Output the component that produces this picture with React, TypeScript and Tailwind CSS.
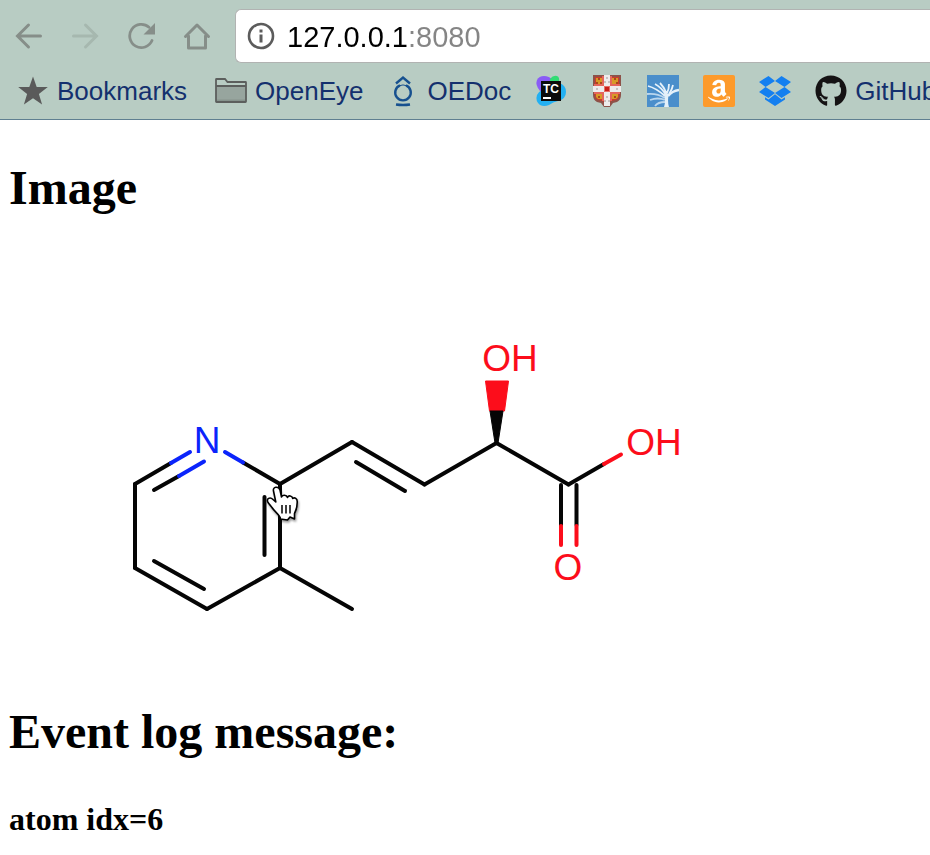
import React, { useState } from 'react'
import { FaAmazon, FaGithub } from 'react-icons/fa'

interface Bookmark {
  name: string
  label?: string
  icon: React.ReactNode
}

type Point = [number, number]

interface Bond {
  from: Point
  to: Point
  color: string
}

const BLACK = '#050505'
const BLUE = '#0b24fb'
const RED = '#fc0d1b'

const bonds: Bond[] = [
  // pyridine ring
  { from: [135, 484], to: [171, 463], color: BLACK },
  { from: [154, 490], to: [179, 476], color: BLACK },
  { from: [135, 484], to: [135, 568], color: BLACK },
  { from: [135, 568], to: [207, 609], color: BLACK },
  { from: [154, 561], to: [204, 589], color: BLACK },
  { from: [207, 609], to: [280, 568], color: BLACK },
  { from: [280, 568], to: [280, 484], color: BLACK },
  { from: [264.5, 497], to: [264.5, 555], color: BLACK },
  { from: [280, 484], to: [243, 462.5], color: BLACK },
  // methyl
  { from: [280, 568], to: [352, 609], color: BLACK },
  // chain
  { from: [280, 484], to: [352, 442], color: BLACK },
  { from: [352, 442], to: [424.5, 484.5], color: BLACK },
  { from: [356, 462], to: [405, 491], color: BLACK },
  { from: [424.5, 484.5], to: [496.5, 443], color: BLACK },
  { from: [496.5, 443], to: [568.5, 484.5], color: BLACK },
  { from: [568.5, 484.5], to: [604, 464], color: BLACK },
  { from: [561, 485], to: [561, 525], color: BLACK },
  { from: [576.5, 485], to: [576.5, 525], color: BLACK },
  // hetero atom halves
  { from: [171, 463], to: [190, 452], color: BLUE },
  { from: [179, 476], to: [204, 461.5], color: BLUE },
  { from: [243, 462.5], to: [225, 452], color: BLUE },
  { from: [604, 464], to: [621, 454.5], color: RED },
  { from: [561, 526], to: [561, 545], color: RED },
  { from: [576.5, 526], to: [576.5, 545], color: RED },
]

function StarIcon() {
  return (
    <svg viewBox="0 0 32 32" className="size-8" aria-hidden="true">
      <path
        d="M16 1.5l3.7 10.4 11.1.2-8.9 6.8 3.2 10.7L16 23.3l-9.1 6.3 3.2-10.7L1.2 12.1l11.1-.2z"
        fill="#5a5a5a"
      />
    </svg>
  )
}

function FolderIcon() {
  return (
    <svg viewBox="0 0 32 32" className="size-8" aria-hidden="true">
      <path d="M1 11h30v16H1z" fill="#97a59e" />
      <path d="M1 24.500h30V27H1z" fill="#86938d" />
      <path
        d="M1 26.500V4.500Q1 4 1.500 4H10l2.500 3H30.500q.5 0 .5.500v19q0 .5-.5.500H1.500q-.5 0-.5-.5zM1 11h30"
        fill="none"
        stroke="#5c5f5d"
        strokeWidth="1.800"
      />
    </svg>
  )
}

function OEDocIcon() {
  return (
    <svg viewBox="0 0 32 32" className="size-8" fill="none" stroke="#16508f" aria-hidden="true">
      <path d="M9 8.500L16 2.500l7 6" strokeWidth="2.400" />
      <path d="M13 10.400A7.800 7.800 0 1 0 19 10.400" strokeWidth="2.400" />
      <path d="M12.500 10.700q3.500-1.500 7 0" strokeWidth="1" />
      <path d="M9 29.500q7 1 14 0" strokeWidth="2.600" />
    </svg>
  )
}

function TeamCityIcon() {
  return (
    <svg viewBox="0 0 32 32" className="size-8" aria-hidden="true">
      <path d="M2 5q2-4 7-4 5 0 9 4l-8 14-5-3Q0 10 2 5z" fill="#8a5cf6" />
      <path d="M15 4q3-4 7-3 3 1 2 7l-9 3z" fill="#31dd73" />
      <path
        d="M24 8q7 2 7 9 0 7-8 9-5 1-9 4-5 2-9 0-5-4-3-10 1-3 5-5z"
        fill="#22b0f2"
      />
      <path d="M6 6h20v20H6z" fill="#0b0b0b" />
      <text
        x="16"
        y="18"
        textAnchor="middle"
        className="font-['Liberation_Sans',sans-serif] text-[12px] font-bold"
        fill="#fff"
      >
        TC
      </text>
      <path d="M8 22h8v2H8z" fill="#fff" />
    </svg>
  )
}

function ShieldIcon() {
  return (
    <svg viewBox="0 0 32 32" className="size-8" aria-hidden="true">
      <path d="M2 0h28v20q0 5-4 7l-4 1-3 4h-6l-3-4-4-1q-4-2-4-7z" fill="#8d5249" />
      <path d="M4 2h24v18q0 4-3 5l-5 1-2 4h-4l-2-4-5-1q-3-1-3-5z" fill="#cf3a2a" />
      <path d="M11 1h10v25H11zM3 9h26v10H3z" fill="#e4665c" />
      <g fill="#d79a26">
        <path d="M5 3h6v6H5zM21 3h6v6h-6zM5 19h6v5H7l-2-2zM21 19h6v3l-2 2h-4z" />
      </g>
      <g fill="#a8481a">
        <path d="M7 3h2v2H7zM5 7h2v2H5zM9 7h2v2H9zM23 3h2v2h-2zM25 7h2v2h-2zM7 21h2v2H7zM23 21h2v2h-2z" />
      </g>
      <path d="M13 0h6v31h-6zM2 11h28v6H2z" fill="#eeecec" />
      <path
        d="M15 2h2v2h-2zM13 6h2v2h-2zM17 6h2v2h-2zM15 21h2v2h-2zM13 25h2v2h-2zM17 25h2v2h-2zM5 13h2v2H5zM25 13h2v2h-2z"
        fill="#c6c1c1"
      />
      <path d="M13 11h6v6h-6z" fill="#e47068" />
      <path d="M14 12h4v4h-4z" fill="#c91f18" />
    </svg>
  )
}

function RaysIcon() {
  return (
    <svg viewBox="0 0 32 32" className="size-8" aria-hidden="true">
      <path d="M0 0h32v32H0z" fill="#4a8ecb" />
      <g fill="none" stroke="#e6f1fa" strokeWidth="1.800">
        <path d="M1 11q8 2 17 10M8 9q6 3 11 11M13 8q4 4 7 11M22 9q0 5-2 9M26 10q-1 5-4 9" />
        <path d="M32 15q-7 1-11 6" strokeWidth="2.600" />
        <path d="M0 19q10-1 18 4M3 25q8-3 15 0M8 31q3-4 10-4" stroke="#b9d6ee" />
      </g>
      <path d="M17 19h5q-2 6 0 13h-5q2-6 0-13z" fill="#e3f0f9" />
    </svg>
  )
}

function AmazonIcon() {
  return (
    <span className="flex size-8 items-center justify-center rounded-xs bg-[#fd9a2b] text-white">
      <FaAmazon size={26} />
    </span>
  )
}

function DropboxIcon() {
  return (
    <svg viewBox="0 0 32 32" className="size-8" fill="#147ff0" aria-hidden="true">
      <path d="M9.500 1L16 6 6.500 12 0 7zM22.500 1L32 7l-6.500 5L16 6zM6.500 12l9.500 6-6.500 5L0 17zM25.500 12L32 17l-9.500 6L16 18z" />
      <path d="M6 22.200l3.500 2.300L16 19.200l6.500 5.300 3.500-2.300v2.300L16 31 6 24.500z" />
    </svg>
  )
}

const bookmarks: Bookmark[] = [
  { name: 'OpenEye', label: 'OpenEye', icon: <FolderIcon /> },
  { name: 'OEDoc', label: 'OEDoc', icon: <OEDocIcon /> },
  { name: 'TeamCity', icon: <TeamCityIcon /> },
  { name: 'University', icon: <ShieldIcon /> },
  { name: 'Research', icon: <RaysIcon /> },
  { name: 'Amazon', icon: <AmazonIcon /> },
  { name: 'Dropbox', icon: <DropboxIcon /> },
  { name: 'GitHub', label: 'GitHub', icon: <FaGithub size={32} color="#151314" /> },
]

function Toolbar() {
  const [address, setAddress] = useState('127.0.0.1:8080')

  return (
    <div className="flex items-center gap-6 pl-[15px]">
      <div className="flex shrink-0 gap-7 text-[#868e89]">
        <button aria-label="Back">
          <svg viewBox="0 0 28 28" className="size-7" fill="none" stroke="currentColor" strokeWidth="3" strokeLinecap="round">
            <path d="M13.500 3L2.500 14l11 11M3 14h22.500" />
          </svg>
        </button>
        <button aria-label="Forward" className="text-[#a6b8af]">
          <svg viewBox="0 0 28 28" className="size-7" fill="none" stroke="currentColor" strokeWidth="3" strokeLinecap="round">
            <path d="M14.500 3l11 11-11 11M25 14H2.500" />
          </svg>
        </button>
        <button aria-label="Reload">
          <svg viewBox="0 0 28 28" className="size-7">
            <path
              d="M25 18.500A11.600 11.600 0 1 1 22 5.300"
              fill="none"
              stroke="currentColor"
              strokeWidth="2.800"
              strokeLinecap="round"
            />
            <path d="M28 1v11.500H16.500z" fill="currentColor" />
          </svg>
        </button>
        <button aria-label="Home">
          <svg viewBox="0 0 28 28" className="size-7" fill="none" stroke="currentColor" strokeWidth="3" strokeLinejoin="round" strokeLinecap="round">
            <path d="M2.500 14.500L14 3l11.500 11.500M5.500 14v12h17V14" />
          </svg>
        </button>
      </div>
      <div className="flex h-[54px] min-w-0 flex-1 items-center gap-3 rounded-l-md border border-r-0 border-[#b1b3b2] bg-white pl-[11px]">
        <svg viewBox="0 0 28 28" className="size-7 shrink-0" aria-hidden="true">
          <circle cx="14" cy="14" r="12" fill="none" stroke="#5c5c5c" strokeWidth="2.600" />
          <path d="M12.500 7.500h3v3h-3zM12.500 12.500h3v8h-3z" fill="#5c5c5c" />
        </svg>
        {/* host in black, port in gray */}
        <input
          aria-label="Address"
          value={address}
          onChange={(e) => setAddress(e.target.value)}
          className="h-full min-w-0 flex-1 bg-[linear-gradient(to_right,#000_122px,#858585_122px)] bg-clip-text pt-0.5 text-[29px] text-transparent caret-black outline-none"
        />
      </div>
    </div>
  )
}

function BookmarksBar() {
  return (
    <nav className="flex h-14 items-center gap-6 overflow-hidden pl-[17px] text-[26px] whitespace-nowrap text-[#14306e]">
      <a href="#bookmarks" className="mr-1 flex shrink-0 items-center gap-2">
        <StarIcon />
        Bookmarks
      </a>
      {bookmarks.map((item) => (
        <a
          key={item.name}
          href={`#${item.name}`}
          aria-label={item.name}
          className="flex shrink-0 items-center gap-2"
        >
          {item.icon}
          {item.label}
        </a>
      ))}
    </nav>
  )
}

function HandCursor() {
  return (
    <g className="drop-shadow-[1px_2px_1px_rgba(0,0,0,0.4)]">
      <path
        d="M273.500 491C272.500 486.500 278.500 486 280 490L281.500 497C282.500 494.500 286.500 494.500 287.500 497.500C288.500 495 292 495.500 292.800 498.500C294.500 497 297.500 498.500 297.200 502C297.300 507 296.500 510 294.500 513.500V519L290 517L287.500 520L280.500 519C280 514.500 275 512.500 272 507.500L268 502.500C266 498.500 270 496.500 273 499.500L275.800 502Z"
        fill="#fff"
        stroke="#000"
        strokeWidth="1.600"
        strokeLinejoin="round"
      />
      <path d="M282 505v8.500M286 505v8.500M290 505v8.500" stroke="#000" strokeWidth="1.500" />
    </g>
  )
}

function Molecule() {
  return (
    <svg
      viewBox="9 220 720 480"
      className="my-1 block w-[720px] max-w-full font-['Liberation_Sans',sans-serif] text-[37px] font-normal"
    >
      {bonds.map((bond, i) => (
        <line
          key={i}
          x1={bond.from[0]}
          y1={bond.from[1]}
          x2={bond.to[0]}
          y2={bond.to[1]}
          stroke={bond.color}
          strokeWidth="4"
          strokeLinecap="round"
        />
      ))}
      {/* wedge bond */}
      <path d="M485.500 381h23l-4 30h-15z" fill={RED} stroke={RED} strokeLinejoin="round" />
      <path d="M490 411h13l-5 32h-3z" fill={BLACK} stroke={BLACK} strokeLinejoin="round" />
      <g textAnchor="middle">
        <text x="207" y="453" fill={BLUE}>N</text>
        <text x="510" y="371" fill={RED}>OH</text>
        <text x="654" y="455" fill={RED}>OH</text>
        <text x="568" y="580" fill={RED}>O</text>
      </g>
      <HandCursor />
    </svg>
  )
}

export default function App() {
  return (
    <div className="min-h-screen bg-white font-['Liberation_Sans',Arial,sans-serif]">
      <header className="border-b border-[#5f7f91] bg-[#b8ccc3] pt-[9px]">
        <Toolbar />
        <BookmarksBar />
      </header>
      <main className="px-[9px] pt-10 font-['Liberation_Serif',serif] font-bold text-black">
        <h2 className="text-5xl leading-14">Image</h2>
        <Molecule />
        <h2 className="text-5xl leading-14">Event log message:</h2>
        <h3 className="mt-[39px] text-[32px] leading-10">atom idx=6</h3>
      </main>
    </div>
  )
}
